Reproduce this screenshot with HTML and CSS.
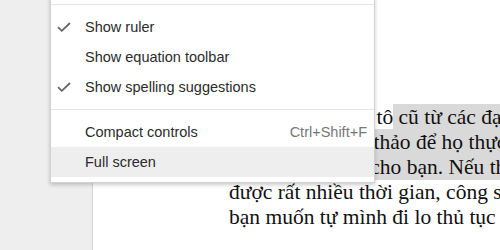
FILE: index.html
```html
<!DOCTYPE html>
<html lang="vi">
<head>
  <meta charset="UTF-8">
  <title>View menu</title>
  <link rel="stylesheet" href="styles.css">
</head>
<body>
  <div class="workspace">
    <!-- Document page -->
    <div class="page">
      <div class="line">Nếu đi mua xe ô tô<span class="sel"> cũ từ các đại lý bán xe</span></div>
      <div class="line"><span class="sel">nộp giấy tờ, bản thảo để họ thực hiện</span></div>
      <div class="line"><span class="sel">xử lý hộ thủ tục cho bạn. Nếu thấy</span></div>
      <div class="line">được rất nhiều thời gian, công sức</div>
      <div class="line">bạn muốn tự mình đi lo thủ tục thì</div>
    </div>
  </div>

  <!-- View menu -->
  <div class="menu">
    <div class="menu-item"><span class="check"></span><span class="label">Mode</span></div>
    <div class="menu-sep"></div>
    <div class="menu-item">
      <span class="check"><svg width="14" height="10" viewBox="0 0 14 10"><path d="M1 5.2 L4.8 8.8 L13 1" fill="none" stroke="#666" stroke-width="1.8"/></svg></span>
      <span class="label">Show ruler</span>
    </div>
    <div class="menu-item"><span class="check"></span><span class="label">Show equation toolbar</span></div>
    <div class="menu-item">
      <span class="check"><svg width="14" height="10" viewBox="0 0 14 10"><path d="M1 5.2 L4.8 8.8 L13 1" fill="none" stroke="#666" stroke-width="1.8"/></svg></span>
      <span class="label">Show spelling suggestions</span>
    </div>
    <div class="menu-sep"></div>
    <div class="menu-item"><span class="check"></span><span class="label">Compact controls</span><span class="shortcut">Ctrl+Shift+F</span></div>
    <div class="menu-item hover"><span class="check"></span><span class="label">Full screen</span></div>
  </div>
</body>
</html>
```

FILE: styles.css
```css
body {
  margin: 0;
  width: 500px;
  height: 250px;
  overflow: hidden;
  background-color: #eeeeee;
  font-family: "Liberation Sans", Arial, sans-serif;
}

.workspace {
  display: flex;
  height: 250px;
  padding-left: 92px;
}

.page {
  flex: 1;
  background: #ffffff;
  border-left: 1px solid #d4d4d4;
  padding: 105px 0 0 136px;
  font-family: "Liberation Serif", "Times New Roman", serif;
  font-size: 21.5px;
  line-height: 25px;
  color: #111;
}

.line {
  white-space: nowrap;
}

.sel {
  background-color: #d9d9d9;
  padding: 1px 0;
}

.menu {
  position: absolute;
  left: 50px;
  top: -34px;
  width: 323px;
  padding: 0 0 5px;
  background: #ffffff;
  border: 1px solid rgba(0, 0, 0, 0.18);
  box-shadow: 0px 2px 4px rgba(0, 0, 0, 0.2);
}

.menu-item {
  display: flex;
  align-items: center;
  height: 30px;
  padding: 0 7px 0 6px;
  font-size: 14.5px;
  color: #2b2b2b;
}

.menu-item.hover {
  background-color: #eeeeee;
}

.check {
  width: 28px;
  display: flex;
  align-items: center;
}

.label {
  flex: 1;
}

.shortcut {
  color: #777;
}

.menu-sep {
  border-top: 1px solid #e5e5e5;
  margin: 7px 0;
}
```
